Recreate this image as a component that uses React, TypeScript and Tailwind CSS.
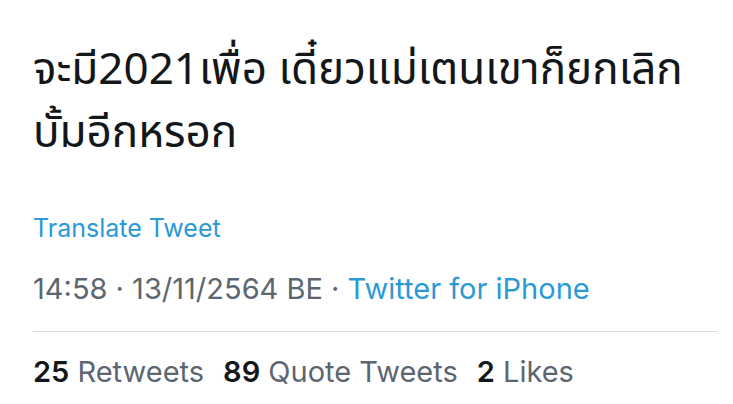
export default function App() {
  return (
    <div className="w-[733px] h-[404px] bg-white overflow-hidden" style={{ fontFamily: 'Inter, "Noto Sans", sans-serif' }}>
      <div className="pl-[33px] pr-[15px]">
        <div
          className="pt-[39px] text-[44px] leading-[63px] text-[#14171a]"
          style={{ fontFamily: '"Noto Sans Thai", "Noto Sans Thai UI", Roboto, "Noto Sans", sans-serif' }}
        >
          จะมี2021เพื่อ เดี๋ยวแม่เตนเขาก็ยกเลิก<br />บั้มอีกหรอก
        </div>
        <div className="mt-[48px] text-[25px] leading-[30px] text-[#2a9ad6]">Translate Tweet</div>
        <div className="mt-[29px] text-[29px] leading-[34px] text-[#5b6670]">
          14:58 · 13/11/2564 BE · <span className="text-[#2a9ad6]">Twitter for iPhone</span>
        </div>
        <div className="mt-[25px] h-px bg-[#d8dde1]" />
        <div className="mt-[23px] text-[29px] leading-[34px] text-[#5b6670] flex gap-[19px]">
          <span><span className="font-semibold text-[#14171a]">25</span> Retweets</span>
          <span><span className="font-semibold text-[#14171a]">89</span> Quote Tweets</span>
          <span><span className="font-semibold text-[#14171a]">2</span> Likes</span>
        </div>
      </div>
    </div>
  );
}
